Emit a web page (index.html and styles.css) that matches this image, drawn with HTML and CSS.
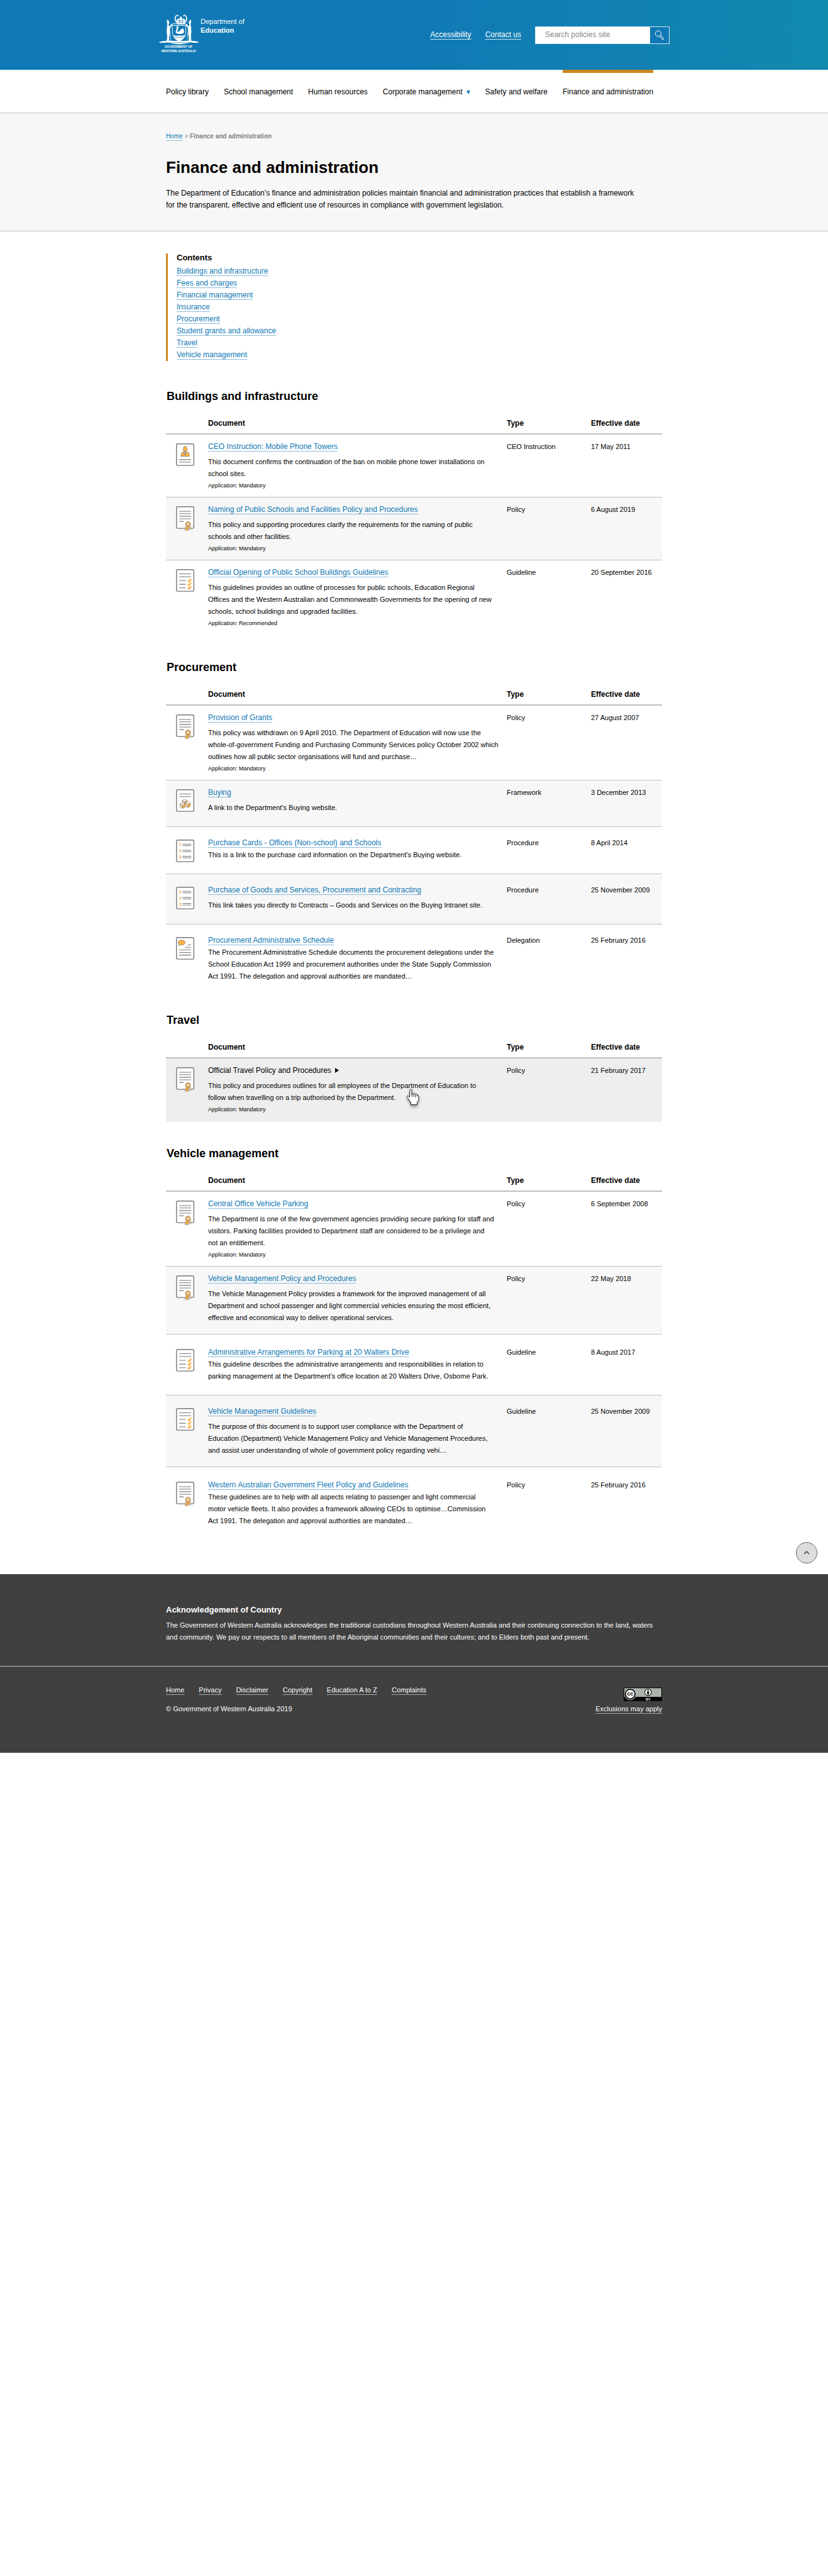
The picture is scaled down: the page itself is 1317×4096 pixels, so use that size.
FILE: index.html
```html
<!DOCTYPE html>
<html lang="en">
<head>
<meta charset="utf-8">
<meta name="viewport" content="width=device-width, initial-scale=1">
<title>Finance and administration</title>
<link rel="stylesheet" href="styles.css">
</head>
<body>
<svg class="sprite" aria-hidden="true">
  <symbol id="doc-policy" viewBox="0 0 42 58">
    <rect class="sheet" x="1" y="1" width="40" height="50" rx="3"/>
    <path class="rule" d="M7.500 11.500h27M7.500 17h27M7.500 23h27M7.500 29h27M7.500 35h10"/>
    <path d="M28 46l4 9 1-4 3 1-4-8z" fill="#fad9b5" stroke="#8a7f70"/>
    <path d="M23 46l-2 10 4-2 2 3 3-10z" fill="#fbb040" stroke="#8a7f70"/>
    <circle cx="27.500" cy="41.500" r="6" fill="#fbb040" stroke="#8a7f70"/>
    <circle cx="27.500" cy="41.500" r="3" fill="#fff" stroke="#8a7f70"/>
  </symbol>
  <symbol id="doc-ceo" viewBox="0 0 42 58">
    <rect class="sheet" x="1" y="1" width="40" height="50" rx="3"/>
    <path d="M11.500 30v-5q0-4 5-5l4.500-1 4.500 1q5 1 5 5v5z" fill="#fbb040" stroke="#777"/>
    <path d="M17.500 19.500l3.500 8 3.500-8z" fill="#fff" stroke="#777"/>
    <path d="M21 20v7" stroke="#777" stroke-width="1.500"/>
    <ellipse cx="21" cy="13" rx="4.500" ry="6" fill="#fbb040" stroke="#777"/>
    <path class="rule" d="M7.500 37.500h27M7.500 43h27"/>
  </symbol>
  <symbol id="doc-guideline" viewBox="0 0 42 58">
    <rect class="sheet" x="1" y="1" width="40" height="50" rx="3"/>
    <path class="rule" d="M7.500 11h27M7.500 17.500h27M7.500 26h15M7.500 35h15M7.500 43h15"/>
    <path d="M27.500 26l2.500 2.500 4.500-6M27.500 34.500l2.500 2.500 4.500-6M27.500 43l2.500 2.500 4.500-6" fill="none" stroke="#fbb040" stroke-width="3.500"/>
  </symbol>
  <symbol id="doc-framework" viewBox="0 0 42 58">
    <rect class="sheet" x="1" y="1" width="40" height="50" rx="3"/>
    <path class="rule" d="M7.500 11h27M7.500 17h27"/>
    <g stroke="#8a7f70" stroke-linejoin="round">
      <path d="M20 23l6 3-6 3-6-3z" fill="#fff"/><path d="M14 26l6 3v7l-6-3z" fill="#fad9b5"/><path d="M26 26l-6 3v7l6-3z" fill="#fbb040"/>
      <path d="M27 29l6 3-6 3-6-3z" fill="#fff"/><path d="M21 32l6 3v7l-6-3z" fill="#fad9b5"/><path d="M33 32l-6 3v7l6-3z" fill="#fbb040"/>
      <path d="M15 31l6 3-6 3-6-3z" fill="#fff"/><path d="M9 34l6 3v7l-6-3z" fill="#fad9b5"/><path d="M21 34l-6 3v7l6-3z" fill="#fbb040"/>
    </g>
  </symbol>
  <symbol id="doc-delegation" viewBox="0 0 42 58">
    <rect class="sheet" x="1" y="1" width="40" height="50" rx="3"/>
    <path d="M5.500 20q2.500-2 1.500-4-2-1.500-2-3.500C5 9 8.500 7 13 7s8 2.500 8 5.500-3.500 6-8 6q-2 0-3.500-.500-2 2-4 2z" fill="#fbb040" stroke="#777"/>
    <path class="rule" d="M26.500 18h8M20 23.500h14.500M7.500 29.500h27M7.500 35.500h27M7.500 41.500h27"/>
  </symbol>
</svg>

<header class="banner">
  <div class="banner__inner">
    <a class="brand" href="#">
      <span class="crest">
        <svg class="crest__arms" viewBox="20 16 272 208" aria-hidden="true">
          <g fill="none" stroke="#fff" stroke-width="5" stroke-linecap="round">
            <path d="M137 26q-16 24 6 46M203 26q16 24-6 46" stroke-width="8" stroke-dasharray="6 7"/>
            <path d="M142 22q8-4 10 4M198 22q-8-4-10 4" stroke-width="6"/>
            <path d="M112 92h92v44q0 46-46 66-46-20-46-66z" stroke-width="4"/>
            <path d="M102 92q4-12 20-12h72q16 0 20 12" stroke-width="5"/>
            <path d="M78 110q28 20 20 92M86 130q-14 40-10 74M236 110q-28 20-20 92M230 130q14 40 10 74" stroke-width="3"/>
            <path d="M24 208h264" stroke-width="6"/>
          </g>
          <g fill="#fff">
            <path d="M146 84q-10-22-4-32 8-10 28-10t28 10q6 10-4 32z"/>
            <path d="M166 30h8v14h-8zM162 34h16v5h-16z"/>
            <path d="M72 48l5 10 5-10 2 12q12 10 3 18l-2 14q14 14 10 38-2 30-6 44l-1 30H66q12-10 10-38-8-30-2-58l3-30q-6-6-3-14z"/>
            <path d="M242 48l-5 10-5-10-2 12q-12 10-3 18l2 14q-14 14-10 38 2 30 6 44l1 30h22q-12-10-10-38 8-30 2-58l-3-30q6-6 3-14z"/>
            <path d="M84 106l22-24 6 6-20 26zM230 106l-22-24-6 6 20 26z"/>
            <path d="M138 106q-2-10 8-10 10 2 7 14-8 18-10 26 10-4 18-4 10-20 28-18-4 6 2 8-6 4 2 8-6 2-1 8-6 12-24 12-22 2-34-8 0-10 9-38-1-5-5 2z"/>
            <path d="M116 158q20 8 42 2 22 6 40-2-4 26-40 44-36-18-42-44z"/>
            <path d="M22 206q40-14 136-6 100-8 134 6-30 4-56 2-30 12-78 14-50-2-78-14-30 2-58-2z"/>
          </g>
          <g fill="none" stroke="#1079b5">
            <path d="M146 58q12-8 24 2 12-10 24-2M150 72q20-8 40 0M160 48v30M180 48v30" stroke-width="3"/>
            <path d="M122 171q18 5 36 1 18 4 34-1M64 210q50 5 94 0 50 5 92-1" stroke-width="3"/>
          </g>
        </svg>
        <span class="crest__text">GOVERNMENT OF<br>WESTERN AUSTRALIA</span>
      </span>
      <span class="brand__name">Department of<br><b>Education</b></span>
    </a>
    <div class="tools">
      <a class="tools__link" href="#">Accessibility</a>
      <a class="tools__link" href="#">Contact us</a>
      <form class="search" role="search">
        <input class="search__box" type="search" placeholder="Search policies site" aria-label="Search policies site">
        <button class="search__go" type="button" aria-label="Search">
          <svg viewBox="0 0 16 16" width="16" height="16" aria-hidden="true"><circle cx="6" cy="5.500" r="4.500" fill="none" stroke="#fff"/><path d="M8.300 9.500l1.700-1 4.500 5q.300 1.500-1.500 1.500z" fill="none" stroke="#fff"/></svg>
        </button>
      </form>
    </div>
  </div>
</header>

<nav class="nav" aria-label="Main">
  <ul class="nav__list wrap">
    <li><a class="nav__link" href="#">Policy library</a></li>
    <li><a class="nav__link" href="#">School management</a></li>
    <li><a class="nav__link" href="#">Human resources</a></li>
    <li><a class="nav__link nav__link--menu" href="#">Corporate management</a></li>
    <li><a class="nav__link" href="#">Safety and welfare</a></li>
    <li><a class="nav__link nav__link--current" href="#" aria-current="page">Finance and administration</a></li>
  </ul>
</nav>

<section class="hero">
  <div class="wrap">
    <p class="crumbs"><a href="#">Home</a> &gt; <b>Finance and administration</b></p>
    <h1 class="hero__title">Finance and administration</h1>
    <p class="hero__lead">The Department of Education’s finance and administration policies maintain financial and administration practices that establish a framework<br>for the transparent, effective and efficient use of resources in compliance with government legislation.</p>
  </div>
</section>

<main class="main">
  <div class="wrap">
    <nav class="contents" aria-labelledby="contents-title">
      <h2 class="contents__title" id="contents-title">Contents</h2>
      <ul class="contents__list">
        <li><a href="#buildings">Buildings and infrastructure</a></li>
        <li><a href="#">Fees and charges</a></li>
        <li><a href="#">Financial management</a></li>
        <li><a href="#">Insurance</a></li>
        <li><a href="#procurement">Procurement</a></li>
        <li><a href="#">Student grants and allowance</a></li>
        <li><a href="#travel">Travel</a></li>
        <li><a href="#vehicles">Vehicle management</a></li>
      </ul>
    </nav>

    <section class="group" id="buildings">
      <h2 class="group__title">Buildings and infrastructure</h2>
      <table class="docs">
        <colgroup><col class="docs__icon-col"><col class="docs__name-col"><col class="docs__type-col"><col></colgroup>
        <thead><tr><td></td><th scope="col">Document</th><th scope="col">Type</th><th scope="col">Effective date</th></tr></thead>
        <tbody>
          <tr>
            <td class="docs__icon"><svg class="icon"><use href="#doc-ceo"/></svg></td>
            <td><a class="docs__link" href="#">CEO Instruction: Mobile Phone Towers</a>
              <p class="docs__text">This document confirms the continuation of the ban on mobile phone tower installations on<br>school sites.</p>
              <p class="docs__note">Application: Mandatory</p></td>
            <td>CEO Instruction</td><td>17 May 2011</td>
          </tr>
          <tr>
            <td class="docs__icon"><svg class="icon"><use href="#doc-policy"/></svg></td>
            <td><a class="docs__link" href="#">Naming of Public Schools and Facilities Policy and Procedures</a>
              <p class="docs__text">This policy and supporting procedures clarify the requirements for the naming of public<br>schools and other facilities.</p>
              <p class="docs__note">Application: Mandatory</p></td>
            <td>Policy</td><td>6 August 2019</td>
          </tr>
          <tr>
            <td class="docs__icon"><svg class="icon"><use href="#doc-guideline"/></svg></td>
            <td><a class="docs__link" href="#">Official Opening of Public School Buildings Guidelines</a>
              <p class="docs__text">This guidelines provides an outline of processes for public schools, Education Regional<br>Offices and the Western Australian and Commonwealth Governments for the opening of new<br>schools, school buildings and upgraded facilities.</p>
              <p class="docs__note">Application: Recommended</p></td>
            <td>Guideline</td><td>20 September 2016</td>
          </tr>
        </tbody>
      </table>
    </section>

    <section class="group" id="procurement">
      <h2 class="group__title">Procurement</h2>
      <table class="docs">
        <colgroup><col class="docs__icon-col"><col class="docs__name-col"><col class="docs__type-col"><col></colgroup>
        <thead><tr><td></td><th scope="col">Document</th><th scope="col">Type</th><th scope="col">Effective date</th></tr></thead>
        <tbody>
          <tr>
            <td class="docs__icon"><svg class="icon"><use href="#doc-policy"/></svg></td>
            <td><a class="docs__link" href="#">Provision of Grants</a>
              <p class="docs__text">This policy was withdrawn on 9 April 2010. The Department of Education will now use the<br>whole-of-government Funding and Purchasing Community Services policy October 2002 which<br>outlines how all public sector organisations will fund and purchase…</p>
              <p class="docs__note">Application: Mandatory</p></td>
            <td>Policy</td><td>27 August 2007</td>
          </tr>
          <tr class="row-end-large">
            <td class="docs__icon"><svg class="icon"><use href="#doc-framework"/></svg></td>
            <td><a class="docs__link" href="#">Buying</a>
              <p class="docs__text">A link to the Department's Buying website.</p></td>
            <td>Framework</td><td>3 December 2013</td>
          </tr>
          <tr class="row-start-medium row-end-large row-tight">
            <td class="docs__icon"><svg class="icon" viewBox="0 0 42 58" aria-hidden="true">
              <rect class="sheet" x="1" y="1" width="40" height="50" rx="3"/>
              <path class="rule" d="M15 10.500h20M15 14h20M15 24.500h20M15 28h20M15 38.500h20M15 42h20"/>
              <g class="numeral"><text x="7" y="15">1</text><text x="7" y="29">2</text><text x="7" y="43">3</text></g>
            </svg></td>
            <td><a class="docs__link" href="#">Purchase Cards - Offices (Non-school) and Schools</a>
              <p class="docs__text">This is a link to the purchase card information on the Department's Buying website.</p></td>
            <td>Procedure</td><td>8 April 2014</td>
          </tr>
          <tr class="row-start-medium row-end-large">
            <td class="docs__icon"><svg class="icon" viewBox="0 0 42 58" aria-hidden="true">
              <rect class="sheet" x="1" y="1" width="40" height="50" rx="3"/>
              <path class="rule" d="M15 10.500h20M15 14h20M15 24.500h20M15 28h20M15 38.500h20M15 42h20"/>
              <g class="numeral"><text x="7" y="15">1</text><text x="7" y="29">2</text><text x="7" y="43">3</text></g>
            </svg></td>
            <td><a class="docs__link" href="#">Purchase of Goods and Services, Procurement and Contracting</a>
              <p class="docs__text">This link takes you directly to Contracts – Goods and Services on the Buying Intranet site.</p></td>
            <td>Procedure</td><td>25 November 2009</td>
          </tr>
          <tr class="row-start-medium row-tight">
            <td class="docs__icon"><svg class="icon"><use href="#doc-delegation"/></svg></td>
            <td><a class="docs__link" href="#">Procurement Administrative Schedule</a>
              <p class="docs__text">The Procurement Administrative Schedule documents the procurement delegations under the<br>School Education Act 1999 and procurement authorities under the State Supply Commission<br>Act 1991. The delegation and approval authorities are mandated…</p></td>
            <td>Delegation</td><td>25 February 2016</td>
          </tr>
        </tbody>
      </table>
    </section>

    <section class="group" id="travel">
      <h2 class="group__title">Travel</h2>
      <table class="docs">
        <colgroup><col class="docs__icon-col"><col class="docs__name-col"><col class="docs__type-col"><col></colgroup>
        <thead><tr><td></td><th scope="col">Document</th><th scope="col">Type</th><th scope="col">Effective date</th></tr></thead>
        <tbody>
          <tr class="row-hover">
            <td class="docs__icon"><svg class="icon"><use href="#doc-policy"/></svg></td>
            <td class="docs__pointed"><a class="docs__link" href="#">Official Travel Policy and Procedures</a>
              <p class="docs__text">This policy and procedures outlines for all employees of the Department of Education to<br>follow when travelling on a trip authorised by the Department.</p>
              <p class="docs__note">Application: Mandatory</p>
              <svg class="pointer" viewBox="0 0 22 27" aria-hidden="true"><path d="M6 2.500q0-1.500 1.500-1.500T9 2.500V8.500q0-1 1.500-1t1.500 1.500q0-1 1.500-1t1.500 1.500q0-1 1.500-1t1.500 1.500v2q0-1 1-1t1 2v5l-2.500 4v3.500h-10v-3.500l-6-8.500q-1-2 1-2l3 2z" fill="#fff" stroke="#222"/><path d="M9 8v5M12 9v4M15 10v4" stroke="#222" fill="none"/></svg></td>
            <td>Policy</td><td>21 February 2017</td>
          </tr>
        </tbody>
      </table>
    </section>

    <section class="group" id="vehicles">
      <h2 class="group__title">Vehicle management</h2>
      <table class="docs">
        <colgroup><col class="docs__icon-col"><col class="docs__name-col"><col class="docs__type-col"><col></colgroup>
        <thead><tr><td></td><th scope="col">Document</th><th scope="col">Type</th><th scope="col">Effective date</th></tr></thead>
        <tbody>
          <tr>
            <td class="docs__icon"><svg class="icon"><use href="#doc-policy"/></svg></td>
            <td><a class="docs__link" href="#">Central Office Vehicle Parking</a>
              <p class="docs__text">The Department is one of the few government agencies providing secure parking for staff and<br>visitors. Parking facilities provided to Department staff are considered to be a privilege and<br>not an entitlement.</p>
              <p class="docs__note">Application: Mandatory</p></td>
            <td>Policy</td><td>6 September 2008</td>
          </tr>
          <tr class="row-end-medium">
            <td class="docs__icon"><svg class="icon"><use href="#doc-policy"/></svg></td>
            <td><a class="docs__link" href="#">Vehicle Management Policy and Procedures</a>
              <p class="docs__text">The Vehicle Management Policy provides a framework for the improved management of all<br>Department and school passenger and light commercial vehicles ensuring the most efficient,<br>effective and economical way to deliver operational services.</p></td>
            <td>Policy</td><td>22 May 2018</td>
          </tr>
          <tr class="row-start-large row-end-large row-tight">
            <td class="docs__icon"><svg class="icon"><use href="#doc-guideline"/></svg></td>
            <td><a class="docs__link" href="#">Administrative Arrangements for Parking at 20 Walters Drive</a>
              <p class="docs__text">This guideline describes the administrative arrangements and responsibilities in relation to<br>parking management at the Department’s office location at 20 Walters Drive, Osborne Park.</p></td>
            <td>Guideline</td><td>8 August 2017</td>
          </tr>
          <tr class="row-start-medium row-end-medium">
            <td class="docs__icon"><svg class="icon"><use href="#doc-guideline"/></svg></td>
            <td><a class="docs__link" href="#">Vehicle Management Guidelines</a>
              <p class="docs__text">The purpose of this document is to support user compliance with the Department of<br>Education (Department) Vehicle Management Policy and Vehicle Management Procedures,<br>and assist user understanding of whole of government policy regarding vehi…</p></td>
            <td>Guideline</td><td>25 November 2009</td>
          </tr>
          <tr class="row-start-large row-tight">
            <td class="docs__icon"><svg class="icon"><use href="#doc-policy"/></svg></td>
            <td><a class="docs__link" href="#">Western Australian Government Fleet Policy and Guidelines</a>
              <p class="docs__text">These guidelines are to help with all aspects relating to passenger and light commercial<br>motor vehicle fleets. It also provides a framework allowing CEOs to optimise…Commission<br>Act 1991. The delegation and approval authorities are mandated…</p></td>
            <td>Policy</td><td>25 February 2016</td>
          </tr>
        </tbody>
      </table>
    </section>
  </div>
  <button class="to-top" type="button" aria-label="Back to top"><svg viewBox="0 0 10 6" width="10" height="6" aria-hidden="true"><path d="M1 5l4-4 4 4" fill="none" stroke="#444" stroke-width="1.500"/></svg></button>
</main>

<footer class="footer">
  <div class="footer__country">
    <div class="wrap">
      <h2 class="footer__title">Acknowledgement of Country</h2>
      <p class="footer__text">The Government of Western Australia acknowledges the traditional custodians throughout Western Australia and their continuing connection to the land, waters<br>and community. We pay our respects to all members of the Aboriginal communities and their cultures; and to Elders both past and present.</p>
    </div>
  </div>
  <div class="footer__base wrap">
    <div class="footer__left">
      <ul class="footer__links">
        <li><a href="#">Home</a></li>
        <li><a href="#">Privacy</a></li>
        <li><a href="#">Disclaimer</a></li>
        <li><a href="#">Copyright</a></li>
        <li><a href="#">Education A to Z</a></li>
        <li><a href="#">Complaints</a></li>
      </ul>
      <p class="footer__copy">© Government of Western Australia 2019</p>
    </div>
    <div class="footer__licence">
      <svg class="cc" viewBox="0 0 88 31" role="img" aria-label="Creative Commons Attribution">
        <rect width="88" height="31" fill="#000"/><rect x="1.500" y="1.500" width="85" height="20" fill="#aab2ab"/>
        <circle cx="15" cy="15" r="14" fill="#aab2ab"/><circle cx="15" cy="15" r="11" fill="#fff" stroke="#000" stroke-width="2.500"/>
        <text x="15" y="19" text-anchor="middle" class="cc__mark">cc</text>
        <circle cx="56" cy="11" r="7.500" fill="#fff" stroke="#000" stroke-width="1.500"/><circle cx="56" cy="6.500" r="1.500"/><path d="M53.500 9h5v4.500h-1.200V17h-2.600v-3.500h-1.200z"/>
        <text x="56" y="29.500" text-anchor="middle" class="cc__by">BY</text>
      </svg>
      <a href="#">Exclusions may apply</a>
    </div>
  </div>
</footer>
</body>
</html>
```
FILE: styles.css
```css
* { box-sizing: border-box; }
body { margin: 0; background: #fff; color: #000; font: 12px/19px "Liberation Sans", Arial, sans-serif; }
h1, h2, p, ul { margin: 0; padding: 0; }
ul { list-style: none; }
a { color: #1079b5; text-decoration: underline; text-decoration-color: #8fbcdb; text-decoration-skip-ink: none; text-underline-offset: 3px; }
.wrap { width: 100%; max-width: 789px; margin: 0 auto; }
.sprite { position: absolute; width: 0; height: 0; }

/* Document icons */
.sheet { fill: #fff; stroke: #777; stroke-width: 2; }
.rule { fill: none; stroke: #777; stroke-width: 1.5px; }
.numeral { fill: #f0aa4a; font: bold 9px "DejaVu Sans", sans-serif; }
.icon { display: block; width: 29px; height: 40px; }

/* Banner */
.banner { background: linear-gradient(90deg, #1079b5 50%, #1189af 100%); }
.banner__inner { display: flex; justify-content: space-between; max-width: 813px; height: 111px; margin: 0 auto; }
.brand { display: flex; gap: 3px; padding-top: 23px; color: #fff; text-decoration: none; }
.crest { display: flex; flex-direction: column; align-items: center; width: 64px; }
.crest__arms { width: 63px; height: 48px; }
.crest__text { font-size: 5px; font-weight: bold; line-height: 7px; text-align: center; white-space: nowrap; }
.brand__name { padding-top: 4px; font-size: 11px; line-height: 14px; }
.tools { display: flex; align-items: center; gap: 22px; }
.tools__link { color: #fff; text-decoration-color: #cfe4f0; }
.search { display: flex; width: 214px; height: 28px; border: 1px solid #cfe4f0; }
.search__box { flex: 1; min-width: 0; padding: 0 15px; border: 0; background: #fff; font: inherit; }
.search__box::placeholder { color: #888; opacity: 1; }
.search__go { display: grid; place-items: center; width: 30px; padding: 0; border: 0; background: #1079b5; }

/* Main navigation */
.nav { border-bottom: 1px solid #bfbfbf; }
.nav__list { display: flex; gap: 24px; }
.nav__link { display: block; height: 68px; padding-top: 21px; border-top: 5px solid transparent; color: #000; text-decoration: none; white-space: nowrap; }
.nav__link--current { border-top-color: #cc871f; }
.nav__link--menu::after { content: ""; display: inline-block; margin-left: 6px; border: 3px solid transparent; border-top: 6px solid #1079b5; border-bottom: 0; }

/* Page heading */
.hero { padding: 27px 0 31px; border-bottom: 1px solid #bfbfbf; background: #f7f7f7; }
.crumbs { color: #808080; font-size: 10px; }
.hero__title { margin: 24px 0 16px; font-size: 26px; line-height: 32px; }
.hero__lead { white-space: nowrap; }

/* Body */
.main { position: relative; padding: 35px 0 65px; }
.contents { margin-bottom: 44px; padding-left: 14px; border-left: 3px solid #cc871f; }
.contents__title { margin-bottom: 6px; font-size: 13px; line-height: 13px; }
.group + .group { margin-top: 38px; }
.group__title { padding-left: 1px; margin-bottom: 21px; font-size: 18px; line-height: 24px; }

.docs { width: 100%; table-layout: fixed; border-collapse: separate; border-spacing: 0; font-size: 11px; line-height: 20px; }
.docs__icon-col { width: 67px; }
.docs__name-col { width: 475px; }
.docs__type-col { width: 134px; }
.docs th { padding: 0 0 6px; font-size: 12px; text-align: left; }
.docs thead td, .docs th { border-bottom: 2px solid #bfbfbf; }
.docs tbody td { padding: 9px 0 8px; border-bottom: 1px solid #bfbfbf; vertical-align: top; white-space: nowrap; }
.docs tbody tr:nth-child(even) { background: #f7f7f7; }
.docs tbody tr:last-child td { padding-bottom: 10px; border-bottom: 0; }
.docs tbody .row-start-medium td { padding-top: 15px; }
.docs tbody .row-start-large td { padding-top: 18px; }
.docs tbody .row-end-medium td { padding-bottom: 16px; }
.docs tbody .row-end-large td { padding-bottom: 20px; }
.docs tbody .docs__icon { padding-left: 16px; }
.docs .icon { margin: 5px 0 -6px; }
.docs__link { display: block; width: max-content; font-size: 12px; }
.docs__text { margin-top: 5px; line-height: 19px; }
.docs__note { font-size: 9px; line-height: 19px; }
.row-tight .docs__text { margin-top: 0; }
.row-hover { background: #eee; }
.row-hover .docs__link { color: #000; text-decoration: none; }
.row-hover .docs__link::after { content: ""; display: inline-block; margin-left: 6px; border: 4px solid transparent; border-left: 6px solid #000; border-right: 0; }
.docs__pointed { position: relative; }
.pointer { position: absolute; top: 48px; left: 315px; width: 22px; height: 27px; filter: drop-shadow(0 3px 2px rgba(0, 0, 0, .4)); }

.to-top { position: absolute; right: 17px; bottom: 17px; display: grid; place-items: center; width: 34px; height: 34px; padding: 0; border: 1px solid #666; border-radius: 50%; background: #ddd; }

/* Footer */
.footer { background: #404040; color: #fff; font-size: 11px; }
.footer a { color: #fff; text-decoration-color: #a8a8a8; }
.footer__country { padding: 47px 0 36px; border-bottom: 1px solid #bfbfbf; }
.footer__title { margin-bottom: 6px; font-size: 13px; line-height: 19px; }
.footer__text { white-space: nowrap; }
.footer__base { display: flex; justify-content: space-between; padding: 28px 0 60px; }
.footer__links { display: flex; gap: 23px; margin-bottom: 11px; }
.footer__licence { display: flex; flex-direction: column; align-items: flex-end; gap: 3px; padding-top: 5px; }
.cc { width: 61px; height: 22px; }
.cc__mark { font: bold 13px "Liberation Sans", sans-serif; }
.cc__by { fill: #fff; font: bold 8px "Liberation Sans", sans-serif; }
```
